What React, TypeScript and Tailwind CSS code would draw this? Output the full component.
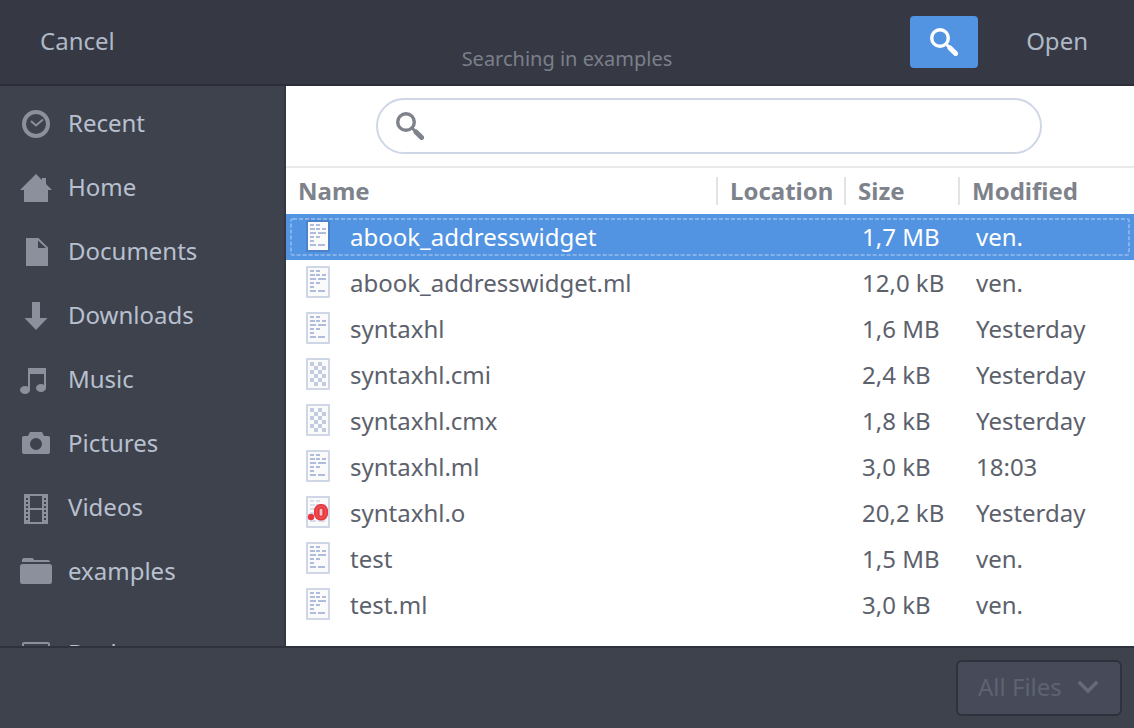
import React from "react";

function SearchIcon({ className }: { className?: string }) {
  return (
    <svg className={className} width="28" height="28" viewBox="0 0 28 28" fill="none" stroke="currentColor" aria-hidden="true">
      <circle cx="10" cy="10" r="8.3" strokeWidth="3.4" />
      <path d="M16.5 16.5 L19 19" strokeWidth="3" />
      <path d="M20 20 L25.6 25.6" strokeWidth="5" strokeLinecap="round" />
    </svg>
  );
}

function PlaceIcon({ kind }: { kind: string }) {
  return (
    <svg className="shrink-0 text-[#8b909c]" width="32" height="32" viewBox="0 0 32 32" fill="currentColor" aria-hidden="true">
      {kind === "recent" && (
        <g fill="none" stroke="currentColor">
          <circle cx="16" cy="16" r="12" strokeWidth="4" />
          <path d="M11 13 L16 17.4 L23 11.4" strokeWidth="2" />
        </g>
      )}
      {kind === "home" && <path d="M16 2 L22 8 V6 H26 V12 L32 18 H28 V30 H4 V18 H0 Z" />}
      {kind === "documents" && <path fillRule="evenodd" d="M6 2 H18.5 L28 11.5 V30 H6 Z M18 4.5 V12 H26 Z" />}
      {kind === "downloads" && <path d="M12 2 H20 V18 H27.5 L16 30 L4.5 18 H12 Z" />}
      {kind === "music" && (
        <g>
          <path d="M8 4 H26 V24 H24 V10 H10 V26 H8 Z" />
          <ellipse cx="5" cy="26" rx="5" ry="4" />
          <ellipse cx="21" cy="24" rx="5" ry="4" />
        </g>
      )}
      {kind === "pictures" && (
        <path
          fillRule="evenodd"
          d="M10 4 H22 L24 8 H28 Q30 8 30 10 V24 Q30 26 28 26 H4 Q2 26 2 24 V10 Q2 8 4 8 H8 Z M16 10 A6 6 0 1 0 16 22 A6 6 0 1 0 16 10 Z"
        />
      )}
      {kind === "videos" && (
        <path
          fillRule="evenodd"
          d="M4 2 H28 V32 H4 Z M10 4 V16 H22 V4 Z M10 18 V30 H22 V18 Z M6 6 V8 H8 V6 Z M6 10 V12 H8 V10 Z M6 14 V16 H8 V14 Z M6 18 V20 H8 V18 Z M6 22 V24 H8 V22 Z M6 26 V28 H8 V26 Z M24 6 V8 H26 V6 Z M24 10 V12 H26 V10 Z M24 14 V16 H26 V14 Z M24 18 V20 H26 V18 Z M24 22 V24 H26 V22 Z M24 26 V28 H26 V26 Z"
        />
      )}
      {kind === "folder" && (
        <g>
          <path d="M2 6 V4 Q2 2 4 2 H12 Q14 2 14 4 H28 Q30 4 30 6 Z" />
          <rect y="8" width="32" height="20" rx="2.5" />
        </g>
      )}
      {kind === "desktop" && (
        <g>
          <rect x="3" y="5" width="26" height="18" rx="1" fill="none" stroke="currentColor" strokeWidth="2" />
          <path d="M10 26 H22 V28 H10 Z" />
        </g>
      )}
    </svg>
  );
}

function FileIcon({ kind, selected }: { kind: string; selected?: boolean }) {
  return (
    <svg className="block" width="24" height="32" viewBox="0 0 24 32" aria-hidden="true">
      <rect width="24" height="32" rx="1" fill={selected ? "#4a83c9" : "#cfd6e6"} />
      <rect x="2" y="2" width="20" height="28" fill="#fafafa" />
      {kind === "binary" ? (
        <path
          fill="#c3cbdf"
          d="M4 4h4v4h-4z M12 4h4v4h-4z M8 8h4v4h-4z M16 8h4v4h-4z M4 12h4v4h-4z M12 12h4v4h-4z M8 16h4v4h-4z M16 16h4v4h-4z M4 20h4v4h-4z M12 20h4v4h-4z M8 24h4v4h-4z M16 24h4v4h-4z"
        />
      ) : (
        <path
          fill={kind === "object" ? "#d9deeb" : "#afbcdc"}
          d="M4 4h4v2h-4z M10 4h4v2h-4z M4 8h5v2h-5z M10 8h4v2h-4z M16 8h4v2h-4z M4 12h6v2h-6z M12 12h8v2h-8z M4 16h4v2h-4z M10 16h4v2h-4z M4 20h4v2h-4z M4 24h6v2h-6z M12 24h7v2h-7z"
        />
      )}
      {kind === "object" && (
        <g>
          <circle cx="5" cy="21" r="3.2" fill="#e5383f" />
          <rect x="8" y="8" width="14" height="16.5" rx="6.5" fill="#e5383f" />
          <rect x="10.5" y="10.5" width="9" height="11.5" rx="4.2" fill="none" stroke="#ef5357" strokeWidth="1.6" />
          <rect x="13.6" y="12.8" width="2.8" height="7" rx="1.4" fill="#f6c4c8" />
        </g>
      )}
    </svg>
  );
}

const places = [
  { name: "Recent", icon: "recent" },
  { name: "Home", icon: "home" },
  { name: "Documents", icon: "documents" },
  { name: "Downloads", icon: "downloads" },
  { name: "Music", icon: "music" },
  { name: "Pictures", icon: "pictures" },
  { name: "Videos", icon: "videos" },
  { name: "examples", icon: "folder" },
];

const files = [
  { name: "abook_addresswidget", icon: "text", size: "1,7 MB", modified: "ven.", selected: true },
  { name: "abook_addresswidget.ml", icon: "text", size: "12,0 kB", modified: "ven." },
  { name: "syntaxhl", icon: "text", size: "1,6 MB", modified: "Yesterday" },
  { name: "syntaxhl.cmi", icon: "binary", size: "2,4 kB", modified: "Yesterday" },
  { name: "syntaxhl.cmx", icon: "binary", size: "1,8 kB", modified: "Yesterday" },
  { name: "syntaxhl.ml", icon: "text", size: "3,0 kB", modified: "18:03" },
  { name: "syntaxhl.o", icon: "object", size: "20,2 kB", modified: "Yesterday" },
  { name: "test", icon: "text", size: "1,5 MB", modified: "ven." },
  { name: "test.ml", icon: "text", size: "3,0 kB", modified: "ven." },
];

function Place({ name, icon }: { name: string; icon: string }) {
  return (
    <li>
      <a href="#" className="flex h-16 items-center gap-4 pl-5">
        <PlaceIcon kind={icon} />
        <span className="pb-0.5">{name}</span>
      </a>
    </li>
  );
}

function ColumnHead({ title }: { title: string }) {
  return (
    <th scope="col" className="p-0 font-bold">
      <div className="flex h-7 items-center border-l-2 border-[#e2e3e5] pl-3">{title}</div>
    </th>
  );
}

export default function App() {
  return (
    <div className="flex h-screen flex-col overflow-hidden bg-[#3e424d] font-['Noto_Sans',sans-serif] text-[24px] leading-8 text-[#b8c0cf]">
      <header className="grid h-[86px] shrink-0 grid-cols-[1fr_auto_1fr] items-center border-b-2 border-[#2b2e39] bg-[#363944] px-3">
        <div>
          <button type="button" className="h-13 px-7 pb-0.5 text-[#afb8c6]">Cancel</button>
        </div>
        <p className="pt-[34px] text-[20px] text-[#7b808b]">Searching in examples</p>
        <div className="flex items-center justify-end gap-5">
          <button type="button" aria-label="Search" className="flex h-13 w-[68px] items-center justify-center rounded bg-[#5294e2] text-white">
            <SearchIcon />
          </button>
          <button type="button" className="h-13 pr-[34px] pb-0.5 pl-7 text-[#afb8c6]">Open</button>
        </div>
      </header>

      <div className="flex min-h-0 flex-1">
        <nav aria-label="Places" className="w-[286px] shrink-0 overflow-hidden border-r-2 border-[#353843] pt-1.5">
          <ul>
            {places.map((place) => (
              <Place key={place.name} name={place.name} icon={place.icon} />
            ))}
          </ul>
          <ul className="pt-[18px]">
            <Place name="Desktop" icon="desktop" />
          </ul>
        </nav>

        <main className="min-w-0 flex-1 overflow-hidden bg-white text-[#5c616c]">
          <div className="flex h-[82px] items-center justify-center border-b-2 border-[#e9e9e9] pr-[2px]">
            <label className="flex h-14 w-[79%] max-w-[666px] items-center gap-3 rounded-full border-2 border-[#cfd6e6] px-[18px]">
              <SearchIcon className="shrink-0 text-[#7d828b]" />
              <input type="text" aria-label="Search files" className="min-w-0 flex-1 bg-transparent outline-none" />
            </label>
          </div>
          <table className="w-full table-fixed border-collapse text-left">
            <colgroup>
              <col />
              <col className="w-32" />
              <col className="w-[114px]" />
              <col className="w-44" />
            </colgroup>
            <thead>
              <tr className="h-[46px] text-[#7d828b]">
                <th scope="col" className="p-0 pl-3 font-bold">Name</th>
                <ColumnHead title="Location" />
                <ColumnHead title="Size" />
                <ColumnHead title="Modified" />
              </tr>
            </thead>
            <tbody>
              {files.map((file) => (
                <tr
                  key={file.name}
                  className={file.selected ? "relative h-[46px] bg-[#5294e2] text-white" : "h-[46px]"}
                >
                  <td className="p-0 pl-5">
                    <div className="flex items-center gap-5">
                      <div className="pb-0.5">
                        <FileIcon kind={file.icon} selected={file.selected} />
                      </div>
                      <span>{file.name}</span>
                    </div>
                    {file.selected && (
                      <svg className="pointer-events-none absolute inset-x-1 inset-y-1 h-[38px] w-[calc(100%-8px)]" aria-hidden="true">
                        <rect x="1" y="1" width="100%" height="36" rx="2" className="w-[calc(100%-2px)]" fill="none" stroke="#86b4ea" strokeWidth="2" strokeDasharray="4 2" />
                      </svg>
                    )}
                  </td>
                  <td className="p-0" />
                  <td className="p-0 pl-[18px]">{file.size}</td>
                  <td className="p-0 pl-[18px]">{file.modified}</td>
                </tr>
              ))}
            </tbody>
          </table>
        </main>
      </div>

      <footer className="flex h-[82px] shrink-0 items-center justify-end border-t-2 border-[#2f323d] px-3">
        <div className="relative text-[#5e6370]">
          <select
            aria-label="File filter"
            disabled
            defaultValue="All Files"
            className="h-14 w-[166px] appearance-none rounded-md border-2 border-[#2f323d] bg-[#474a58] pb-0.5 pl-5 opacity-100"
          >
            <option>All Files</option>
          </select>
          <svg className="pointer-events-none absolute top-[21px] right-6 text-[#666b78]" width="20" height="14" viewBox="0 0 20 14" fill="none" stroke="currentColor" strokeWidth="3.4" aria-hidden="true">
            <path d="M2 2 L10 10 L18 2" strokeLinecap="square" />
          </svg>
        </div>
      </footer>
    </div>
  );
}
